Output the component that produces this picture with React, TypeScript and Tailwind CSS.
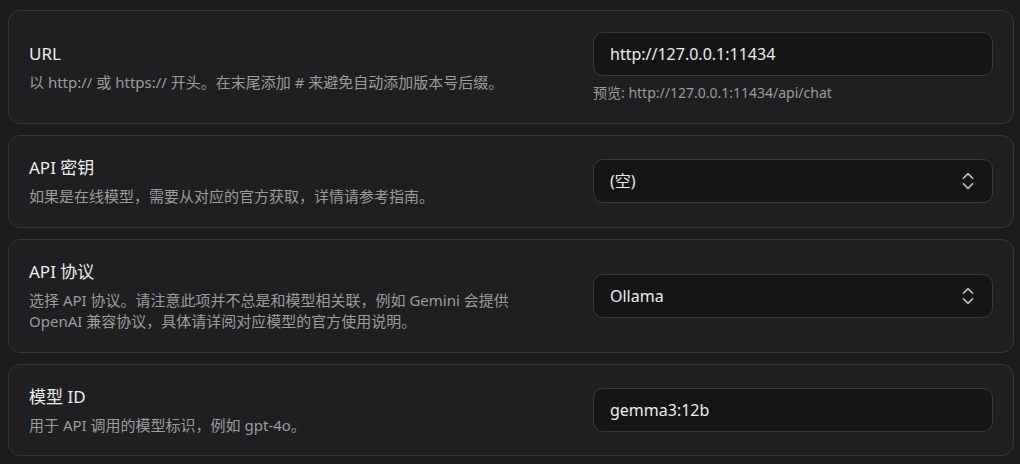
import React from "react";
import { ChevronsUpDown } from "lucide-react";

interface Row {
  title: string;
  desc: string;
  value: string;
  select?: boolean;
  preview?: string;
}

const rows: Row[] = [
  {
    title: "URL",
    desc: "以 http:// 或 https:// 开头。在末尾添加 # 来避免自动添加版本号后缀。",
    value: "http://127.0.0.1:11434",
    preview: "预览: http://127.0.0.1:11434/api/chat",
  },
  {
    title: "API 密钥",
    desc: "如果是在线模型，需要从对应的官方获取，详情请参考指南。",
    value: "(空)",
    select: true,
  },
  {
    title: "API 协议",
    desc: "选择 API 协议。请注意此项并不总是和模型相关联，例如 Gemini 会提供 OpenAI 兼容协议，具体请详阅对应模型的官方使用说明。",
    value: "Ollama",
    select: true,
  },
  {
    title: "模型 ID",
    desc: "用于 API 调用的模型标识，例如 gpt-4o。",
    value: "gemma3:12b",
  },
];

function Field({ row }: { row: Row }) {
  return (
    <div className="flex items-center gap-12 rounded-[12px] border border-[#363638] bg-[#1f1f21] px-5 py-[19px]">
      <div className="flex-1 min-w-0">
        <div className="text-[17px] leading-[26px] text-[#ededed]">{row.title}</div>
        <div className="mt-[5px] text-[15px] leading-[21.5px] text-[#9c9c9c]">{row.desc}</div>
      </div>
      <div className={row.preview ? "w-[400px] pt-[2px]" : "w-[400px]"}>
        <div className="flex h-[44px] items-center justify-between rounded-[10px] border border-[#3a3a3c] bg-[#151516] pl-4 pr-[13px] text-[16px] text-[#ececec]">
          <span>{row.value}</span>
          {row.select && (
            <ChevronsUpDown size={22} strokeWidth={1.8} className="text-[#bdbdbd]" />
          )}
        </div>
        {row.preview && (
          <div className="mt-[6px] text-[14px] leading-[22px] text-[#9a9a9a]">{row.preview}</div>
        )}
      </div>
    </div>
  );
}

export default function App() {
  return (
    <div
      className="min-h-screen bg-[#1b1b1c] pl-2 pr-[6px] pt-[10px] pb-[7px]"
      style={{ fontFamily: '"Noto Sans", "Noto Sans CJK SC", sans-serif' }}
    >
      <div className="flex flex-col gap-[11px]">
        {rows.map((row) => (
          <Field key={row.title} row={row} />
        ))}
      </div>
    </div>
  );
}
